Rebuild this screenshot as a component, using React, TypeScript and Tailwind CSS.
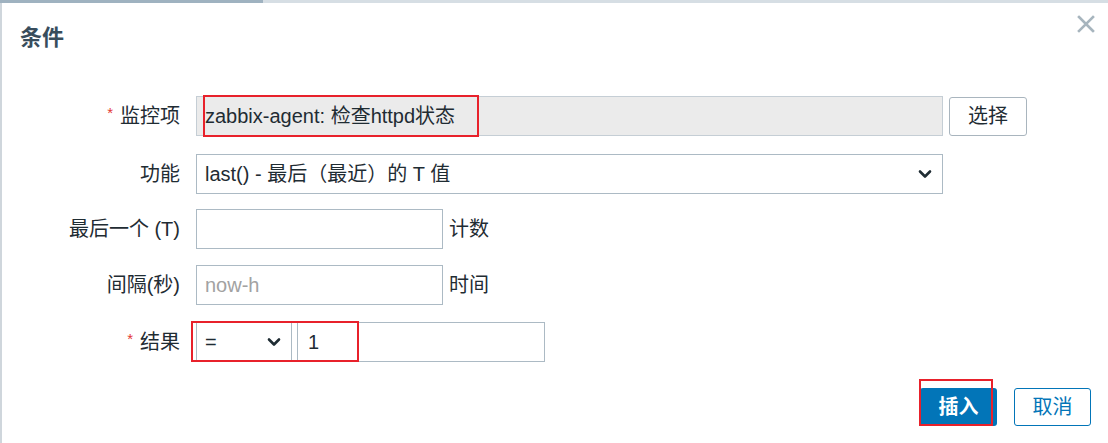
import React from "react";

const font = "font-['Liberation_Sans','Noto_Sans_CJK_SC',sans-serif]";

// label column on the left, right aligned
const Label = ({ text, required }: { text: string; required?: boolean }) => (
  <div className="flex w-[178px] shrink-0 items-center justify-end">
    {required && <span className="mr-[7px] -mt-[6px] text-[15px] text-[#e33734]">*</span>}
    <span className="text-[20px] text-[#1f2c33]">{text}</span>
  </div>
);

const Chevron = () => (
  <svg width="14" height="10" viewBox="0 0 14 10" fill="none">
    <path d="M2 2.5 L7 7.5 L12 2.5" stroke="#1f2c33" strokeWidth="2.6" strokeLinecap="round" strokeLinejoin="round" />
  </svg>
);

const App = () => {
  return (
    <div className={`relative h-[443px] w-[1108px] overflow-hidden bg-white ${font}`}>
      {/* strip of the page behind the dialog */}
      <div className="flex h-[3px]">
        <div className="w-[263px] bg-[#9fb2c0]" />
        <div className="flex-1 bg-[#d6dee4]" />
      </div>

      <div className="relative h-[440px] border-l-2 border-[#cfd6dc]">
        <h2 className="pl-[18px] pt-[20px] text-[22px] font-bold leading-[30px] text-[#384d5c]">条件</h2>

        <button className="absolute right-[11px] top-[10px] p-[2px]">
          <svg width="18" height="18" viewBox="0 0 18 18">
            <path d="M2 2 L16 16 M16 2 L2 16" stroke="#a7b5be" strokeWidth="2.6" strokeLinecap="square" />
          </svg>
        </button>

        {/* form rows */}
        <div className="mt-[43px] flex flex-col">
          <div className="flex h-[40px] items-center gap-[16px]">
            <Label text="监控项" required />
            <div className="flex h-[40px] w-[747px] items-center border border-[#c5ced5] bg-[#ebebeb] pl-[8px] text-[20px] text-[#1f2c33]">
              zabbix-agent: 检查httpd状态
            </div>
            <button className="-ml-[10px] h-[39px] w-[78px] rounded-[3px] border border-[#a9b5be] bg-white text-[20px] text-[#1f2c33]">
              选择
            </button>
          </div>

          <div className="mt-[18px] flex h-[40px] items-center gap-[16px]">
            <Label text="功能" />
            <div className="flex h-[40px] w-[747px] items-center justify-between border border-[#acbac4] bg-white pl-[8px] pr-[10px] text-[20px] text-[#1f2c33]">
              <span>last() - 最后（最近）的 T 值</span>
              <Chevron />
            </div>
          </div>

          <div className="mt-[15px] flex h-[40px] items-center gap-[16px]">
            <Label text="最后一个 (T)" />
            <div className="flex h-[40px] w-[247px] items-center border border-[#acbac4] bg-white" />
            <span className="-ml-[10px] text-[20px] text-[#1f2c33]">计数</span>
          </div>

          <div className="mt-[16px] flex h-[40px] items-center gap-[16px]">
            <Label text="间隔(秒)" />
            <div className="flex h-[40px] w-[247px] items-center border border-[#acbac4] bg-white pl-[8px] text-[20px] text-[#a2a2a2]">
              now-h
            </div>
            <span className="-ml-[10px] text-[20px] text-[#1f2c33]">时间</span>
          </div>

          <div className="mt-[17px] flex h-[40px] items-center gap-[16px]">
            <Label text="结果" required />
            <div className="flex items-center gap-[5px]">
              <div className="flex h-[40px] w-[96px] items-center justify-between border border-[#acbac4] bg-white pl-[8px] pr-[10px] text-[20px] text-[#1f2c33]">
                <span>=</span>
                <Chevron />
              </div>
              <div className="flex h-[40px] w-[248px] items-center border border-[#acbac4] bg-white pl-[10px] text-[20px] text-[#1f2c33]">
                1
              </div>
            </div>
          </div>
        </div>

        {/* footer buttons */}
        <div className="mt-[26px] flex justify-end gap-[17px] pr-[17px]">
          <button className="h-[38px] w-[77px] rounded-[3px] bg-[#0275b8] text-[20px] font-bold text-white">插入</button>
          <button className="h-[38px] w-[77px] rounded-[3px] border border-[#0275b8] bg-white text-[20px] text-[#0275b8]">
            取消
          </button>
        </div>
      </div>

      {/* red annotation boxes drawn over the screenshot */}
      <div className="pointer-events-none absolute left-[203px] top-[95px] h-[42px] w-[276px] border-2 border-[#e8212b]" />
      <div className="pointer-events-none absolute left-[191px] top-[321px] h-[41px] w-[168px] border-2 border-[#e8212b]" />
      <div className="pointer-events-none absolute left-[919px] top-[379px] h-[47px] w-[74px] border-2 border-[#e8212b]" />
    </div>
  );
};

export default App;
